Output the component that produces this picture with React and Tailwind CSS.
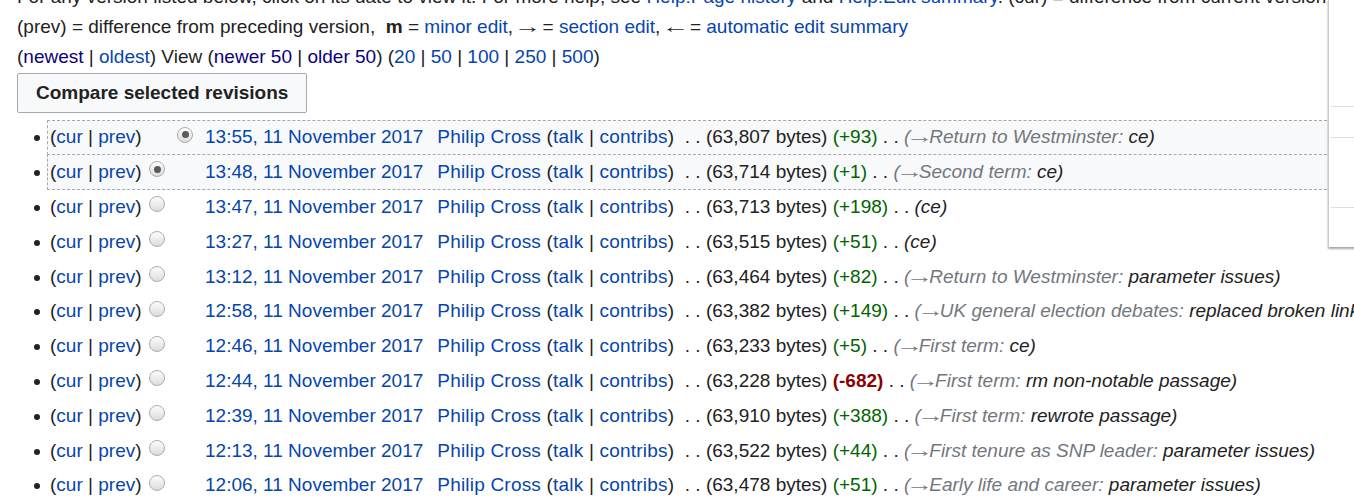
import React from "react";

const rows = [
  { time: "13:55", size: "63,807", diff: "+93", section: "Return to Westminster:", text: "ce", sel: "diff" },
  { time: "13:48", size: "63,714", diff: "+1", section: "Second term:", text: "ce", sel: "old" },
  { time: "13:47", size: "63,713", diff: "+198", section: null, text: "ce" },
  { time: "13:27", size: "63,515", diff: "+51", section: null, text: "ce" },
  { time: "13:12", size: "63,464", diff: "+82", section: "Return to Westminster:", text: "parameter issues" },
  { time: "12:58", size: "63,382", diff: "+149", section: "UK general election debates:", text: "replaced broken links" },
  { time: "12:46", size: "63,233", diff: "+5", section: "First term:", text: "ce" },
  { time: "12:44", size: "63,228", diff: "-682", section: "First term:", text: "rm non-notable passage" },
  { time: "12:39", size: "63,910", diff: "+388", section: "First term:", text: "rewrote passage" },
  { time: "12:13", size: "63,522", diff: "+44", section: "First tenure as SNP leader:", text: "parameter issues" },
  { time: "12:06", size: "63,478", diff: "+51", section: "Early life and career:", text: "parameter issues" },
];

function A({ children, visited }) {
  return <a className={visited ? "text-[#0b0080]" : "text-[#0645ad]"}>{children}</a>;
}

// wide thin arrow, like the symbol font in the screenshot
function Arrow({ left }) {
  return (
    <span className="inline-block w-[19px] text-center not-italic">
      <span className="inline-block scale-x-[1.45]">{left ? "←" : "→"}</span>
    </span>
  );
}

function Radio({ checked, hidden }) {
  return (
    <span
      className={`mb-[5px] flex h-[16px] w-[16px] shrink-0 items-center justify-center rounded-full border border-[#adadad] bg-gradient-to-b from-[#fdfdfd] to-[#dcdcdc] ${
        hidden ? "invisible" : ""
      }`}
    >
      {checked && <span className="h-[7px] w-[7px] rounded-full bg-[#5a5a5a]" />}
    </span>
  );
}

function Row({ r, index }) {
  const border =
    index === 0
      ? "border border-dashed border-[#a2a9b1] bg-[#f8f9fa]"
      : index === 1
      ? "-mt-px border border-dashed border-[#a2a9b1] bg-[#f8f9fa]"
      : "border border-transparent";
  const neg = r.diff.startsWith("-");

  return (
    <li className="flex h-[34.8px]">
      <div className="flex w-[30px] shrink-0 items-center justify-end pr-[7px]">
        <span className="mt-[2px] h-[6px] w-[6px] rounded-full bg-[#222]" />
      </div>
      <div className={`flex min-w-0 flex-1 items-center whitespace-nowrap pl-[2px] ${border}`}>
        <span className="w-[92px] shrink-0">
          (<A>cur</A> | <A>prev</A>)
        </span>
        <span className="ml-[7px]">
          <Radio checked={r.sel === "old"} hidden={index === 0} />
        </span>
        <span className="ml-[12px]">
          <Radio checked={r.sel === "diff"} hidden={index !== 0} />
        </span>
        <span className="ml-[12px]">
          <A>{r.time}, 11 November 2017</A>
        </span>
        <span className="ml-[14px]">
          <span className="tracking-[0.2px]">
            <A>Philip Cross</A> (<A>talk</A> | <A>contribs</A>)
          </span>
          {"\u00a0 . . "}({r.size} bytes){" "}
          {neg ? (
            <strong className="text-[#8b0000]">({r.diff})</strong>
          ) : (
            <span className="text-[#006400]">({r.diff})</span>
          )}
          {" . . "}
          <span className="italic">
            {r.section ? (
              <>
                <span className="text-[#72777d]">
                  (<Arrow />
                  {r.section}
                </span>{" "}
                {r.text})
              </>
            ) : (
              <>({r.text})</>
            )}
          </span>
        </span>
      </div>
    </li>
  );
}

export default function App() {
  return (
    <div
      className="relative h-[500px] w-[1354px] overflow-hidden bg-white text-[19px] leading-[30px] text-[#222]"
      style={{ fontFamily: '"Liberation Sans", Arial, sans-serif' }}
    >
      <div className="-mt-[18px] px-[17px]">
        <p className="whitespace-nowrap">
          For any version listed below, click on its date to view it. For more help, see{" "}
          <A>Help:Page history</A> and <A>Help:Edit summary</A>. (cur) = difference from current version,
        </p>
        <p className="whitespace-nowrap">
          (prev) = difference from preceding version, &nbsp;<b>m</b> = <A>minor edit</A>, <Arrow /> ={" "}
          <A>section edit</A>, <Arrow left /> = <A>automatic edit summary</A>
        </p>
        <p className="whitespace-nowrap">
          (<A visited>newest</A> | <A>oldest</A>) View (<A visited>newer 50</A> | <A visited>older 50</A>) (
          <A>20</A> | <A>50</A> | <A>100</A> | <A>250</A> | <A>500</A>)
        </p>
        <button className="mt-[1px] h-[40px] rounded-[2px] border border-[#a2a9b1] bg-[#f8f9fa] px-[18px] font-bold text-[#222]">
          Compare selected revisions
        </button>
        <ul className="mt-[7px]">
          {rows.map((r, i) => (
            <Row key={r.time} r={r} index={i} />
          ))}
        </ul>
      </div>

      <div className="absolute left-[1328px] top-0 h-[247px] w-[40px] border-l border-[#c8ccd1] bg-white shadow-[0_2px_2px_rgba(0,0,0,0.35)]">
        <div className="ml-[2px] mt-[106px] border-t border-[#dcdfe3]" />
        <div className="ml-[2px] mt-[30px] border-t border-[#dcdfe3]" />
        <div className="ml-[2px] mt-[69px] border-t border-[#dcdfe3]" />
      </div>
    </div>
  );
}
